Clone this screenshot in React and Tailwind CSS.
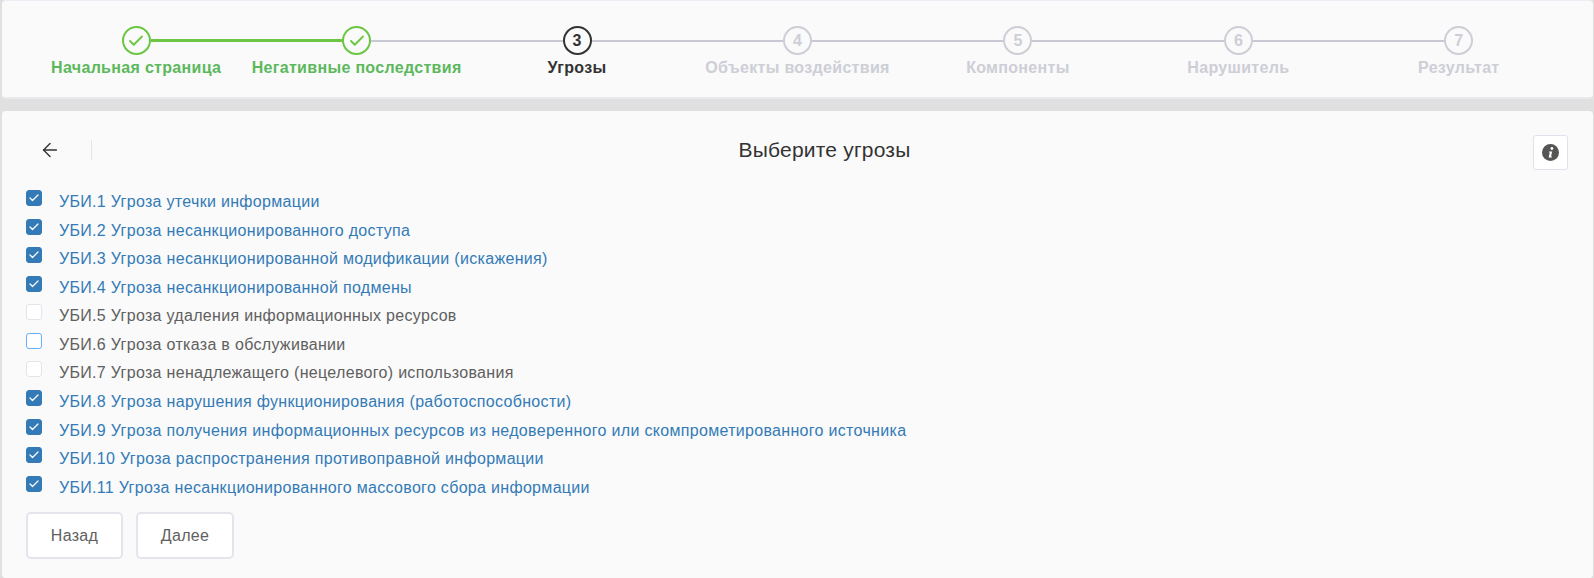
import { Check, ArrowLeft } from 'lucide-react'

const steps = [
  { label: 'Начальная страница', state: 'done' },
  { label: 'Негативные последствия', state: 'done' },
  { label: 'Угрозы', state: 'current' },
  { label: 'Объекты воздействия', state: 'todo' },
  { label: 'Компоненты', state: 'todo' },
  { label: 'Нарушитель', state: 'todo' },
  { label: 'Результат', state: 'todo' },
]

const threats = [
  { text: 'УБИ.1 Угроза утечки информации', on: true },
  { text: 'УБИ.2 Угроза несанкционированного доступа', on: true },
  { text: 'УБИ.3 Угроза несанкционированной модификации (искажения)', on: true },
  { text: 'УБИ.4 Угроза несанкционированной подмены', on: true },
  { text: 'УБИ.5 Угроза удаления информационных ресурсов', on: false },
  { text: 'УБИ.6 Угроза отказа в обслуживании', on: false, focus: true },
  { text: 'УБИ.7 Угроза ненадлежащего (нецелевого) использования', on: false },
  { text: 'УБИ.8 Угроза нарушения функционирования (работоспособности)', on: true },
  { text: 'УБИ.9 Угроза получения информационных ресурсов из недоверенного или скомпрометированного источника', on: true },
  { text: 'УБИ.10 Угроза распространения противоправной информации', on: true },
  { text: 'УБИ.11 Угроза несанкционированного массового сбора информации', on: true },
]

const Step = ({ step, index }) => {
  const isDone = step.state === 'done'
  const leftLine = index === 0 ? 'bg-transparent' : index === 1 ? 'h-[3px] bg-[#6cc644]' : 'bg-[#c8c9d3]'
  const rightLine = index === 6 ? 'bg-transparent' : index === 0 ? 'h-[3px] bg-[#6cc644]' : 'bg-[#c8c9d3]'
  const circle = isDone
    ? 'border-[#6cc644] text-[#6cc644]'
    : step.state === 'current'
      ? 'border-[#333333] text-[#333333]'
      : 'border-[#cdced6] text-[#cdced6]'
  const label = isDone ? 'text-[#5cb85c]' : step.state === 'current' ? 'text-[#333333]' : 'text-[#cdced6]'

  return (
    <div className="flex flex-col items-center">
      <div className="flex items-center w-full">
        <div className={`flex-1 h-[2px] ${leftLine}`} />
        <div className={`w-[29px] h-[29px] rounded-full border-2 flex items-center justify-center text-[16px] font-bold ${circle}`}>
          {isDone ? <Check className="w-[18px] h-[18px]" strokeWidth={2.5} /> : index + 1}
        </div>
        <div className={`flex-1 h-[2px] ${rightLine}`} />
      </div>
      <div className={`mt-[1px] text-[16px] font-bold leading-[23px] tracking-[0.32px] whitespace-nowrap ${label}`}>{step.label}</div>
    </div>
  )
}

const Threat = ({ item }) => {
  const box = item.on
    ? 'bg-[#337ab7] border-[#337ab7]'
    : item.focus
      ? 'bg-white border-[#66afff]'
      : 'bg-white border-[#e3e4ec]'

  return (
    <div className="flex items-start h-[22.86px] mb-[5.71px]">
      <div className={`w-4 h-4 rounded-[3px] border flex items-center justify-center ${box}`}>
        {item.on && <Check className="w-3 h-3 text-white" strokeWidth={2.5} />}
      </div>
      <span className={`ml-[17px] text-[16px] leading-[22.86px] tracking-[0.31px] mt-[1px] ${item.on ? 'text-[#337ab7]' : 'text-[#606060]'}`}>
        {item.text}
      </span>
    </div>
  )
}

const App = () => {
  return (
    <div className="w-[1594px] h-[578px] overflow-hidden bg-[#e0e0e0] pl-[2px] pr-[1px] font-['Liberation_Sans',Arial,sans-serif]">
      <div className="h-[99px] bg-[#fafafa] rounded-[4px] border-t border-b-2 border-t-[#eceef5] border-b-[#e9e9ee] px-[24px] pt-[25px]">
        <div className="grid grid-cols-7">
          {steps.map((step, i) => <Step key={step.label} step={step} index={i} />)}
        </div>
      </div>

      <div className="h-[467px] mt-[12px] bg-[#fafafa] rounded-[4px] pl-[24px] pr-[25px]">
        <div className="flex items-center h-[77px] mb-[2px]">
          <div className="w-[66px] h-[20px] flex items-center border-r border-[#e3e4ec]">
            <ArrowLeft className="w-[22px] h-[22px] ml-[13px] text-[#333333]" strokeWidth={1.5} />
          </div>
          <h1 className="flex-1 text-center ml-[24px] text-[21px] text-[#333333] tracking-[0.2px]">Выберите угрозы</h1>
          <button className="w-[35px] h-[35px] bg-white border border-[#e0e1ea] rounded-[3px] flex items-center justify-center mt-[6px]">
            <svg width="17" height="17" viewBox="0 0 17 17">
              <circle cx="8.5" cy="8.5" r="8.5" fill="#555555" />
              <circle cx="9.9" cy="4.5" r="1.4" fill="#ffffff" />
              <path d="M7 7.4h3.2l-1.2 5h1.1l-.3 1.1H6.6l1.2-5H6.8z" fill="#ffffff" />
            </svg>
          </button>
        </div>

        <div>
          {threats.map((item) => <Threat key={item.text} item={item} />)}
        </div>

        <div className="flex gap-[13px] mt-[14px]">
          <button className="w-[97px] h-[47px] bg-white border-2 border-[#e3e4ec] rounded-[5px] text-[16px] tracking-[0.3px] text-[#606060]">Назад</button>
          <button className="w-[98px] h-[47px] bg-white border-2 border-[#e3e4ec] rounded-[5px] text-[16px] tracking-[0.3px] text-[#606060]">Далее</button>
        </div>
      </div>
    </div>
  )
}

export default App
